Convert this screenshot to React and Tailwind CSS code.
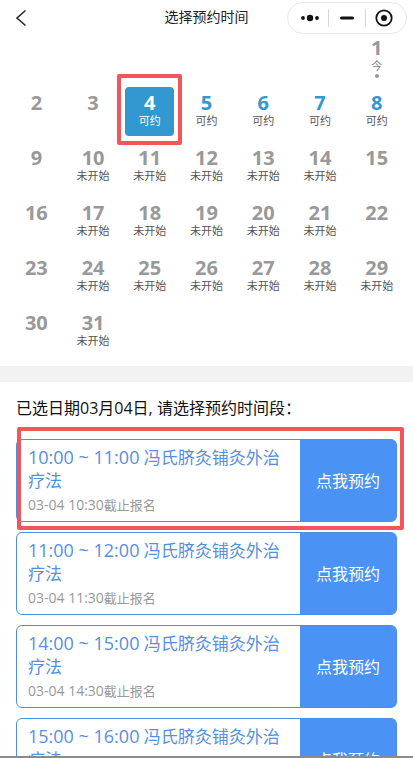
const OPEN_DAYS = [4, 5, 6, 7, 8];
const PLAIN_DAYS = [2, 3, 9, 15, 16, 22, 23, 30];
const SELECTED_DAY = 4;

const SLOTS = [
  { time: "10:00 ~ 11:00", deadline: "03-04 10:30", marked: true },
  { time: "11:00 ~ 12:00", deadline: "03-04 11:30" },
  { time: "14:00 ~ 15:00", deadline: "03-04 14:30" },
  { time: "15:00 ~ 16:00", deadline: "03-04 15:30" },
];

function Header() {
  return (
    <header className="relative flex h-[29px] shrink-0 items-center justify-center pt-[5px]">
      <button type="button" aria-label="返回" className="absolute left-[15px] top-[9px]">
        <svg width="12" height="18" viewBox="0 0 12 18" fill="none" stroke="#222" strokeWidth="1.5">
          <path d="M10.5 1.5 2 9l8.500 7.500" />
        </svg>
      </button>
      <h1 className="text-sm leading-5 text-[#222]">选择预约时间</h1>
      <div className="absolute right-[6px] top-[2px] z-10 flex h-8 w-[120px] items-center rounded-full border border-[#e8e8e8] bg-white">
        <button type="button" aria-label="更多" className="flex flex-1 justify-center pl-1">
          <svg width="20" height="8" viewBox="0 0 20 8" fill="#111">
            <circle cx="3" cy="4" r="1.900" />
            <circle cx="10" cy="4" r="3.200" />
            <circle cx="17" cy="4" r="1.900" />
          </svg>
        </button>
        <span className="h-[18px] w-px bg-[#d8d8d8]" />
        <button type="button" aria-label="最小化" className="flex flex-1 justify-center">
          <svg width="14" height="4" viewBox="0 0 14 4">
            <rect width="14" height="3" y="0.500" rx="1.500" fill="#111" />
          </svg>
        </button>
        <span className="h-[18px] w-px bg-[#d8d8d8]" />
        <button type="button" aria-label="关闭" className="flex flex-1 justify-center pr-1">
          <svg width="18" height="18" viewBox="0 0 18 18">
            <circle cx="9" cy="9" r="7.700" fill="none" stroke="#111" strokeWidth="1.800" />
            <circle cx="9" cy="9" r="3" fill="#111" />
          </svg>
        </button>
      </div>
    </header>
  );
}

function Day({ day }) {
  const open = OPEN_DAYS.includes(day);
  const selected = day === SELECTED_DAY;
  const today = day === 1;
  const upcoming = !open && !today && !PLAIN_DAYS.includes(day);
  const numberColor = selected ? "text-white" : open ? "text-[#3398cf]" : "text-[#999]";

  return (
    <button
      type="button"
      className={`relative flex size-[49px] flex-col items-center rounded pt-1 ${selected ? "bg-[#3398cf]" : ""}`}
    >
      <span className={`text-xl leading-6 font-bold ${numberColor}`}>{day}</span>
      {open && (
        <span className={`text-[11px] leading-[11px] ${selected ? "text-white" : "text-[#555]"}`}>可约</span>
      )}
      {upcoming && <span className="text-[11px] leading-[11px] whitespace-nowrap text-[#555]">未开始</span>}
      {today && (
        <>
          <span className="text-[11px] leading-[11px] text-[#777]">今</span>
          <span className="mt-[3px] size-1 rounded-full bg-[#999]" />
        </>
      )}
      {selected && (
        <span className="pointer-events-none absolute -inset-x-2 -top-[13px] -bottom-[9px] rounded-xs border-4 border-[#f2555a]" />
      )}
    </button>
  );
}

function Calendar() {
  const days = Array.from({ length: 31 }, (_, i) => i + 1);
  return (
    <section className="grid shrink-0 auto-rows-[55px] grid-cols-7 place-items-center px-2 pb-[7px]">
      {days.map((day) => (
        <div key={day} className={day === 1 ? "col-start-7" : ""}>
          <Day day={day} />
        </div>
      ))}
    </section>
  );
}

function Slot({ time, deadline, marked }) {
  return (
    <li className="relative flex rounded-md border border-[#4a90e2]">
      <div className="min-w-0 flex-1 pt-[6px] pr-3 pb-[6px] pl-[11px]">
        <p className="text-[17px] leading-[23px] text-[#5590e0]">
          <time className="text-lg leading-[23px]">{time}</time> 冯氏脐灸铺灸外治疗法
        </p>
        <p className="mt-[3px] text-[13px] leading-5 text-[#999]">
          <time className="text-sm leading-5">{deadline}</time>截止报名
        </p>
      </div>
      <button type="button" className="w-24 shrink-0 rounded-r bg-[#4a92f3] text-base text-white">
        点我预约
      </button>
      {marked && (
        <span className="pointer-events-none absolute -top-[13px] -right-2 -bottom-[9px] left-0 rounded-xs border-4 border-[#f2555a]" />
      )}
    </li>
  );
}

export default function App() {
  return (
    <main className="flex h-screen flex-col overflow-hidden border-b-2 border-[#8a8a8a] bg-white font-['Open_Sans','Noto_Sans_CJK_SC',sans-serif]">
      <Header />
      <Calendar />
      <div className="h-4 shrink-0 bg-[#f2f2f2]" />
      <section className="min-h-0 flex-1 px-4 pt-[14px]">
        <h2 className="text-base leading-6 text-[#111]">已选日期03月04日, 请选择预约时间段：</h2>
        <ul className="mt-[19px] flex flex-col gap-[10px]">
          {SLOTS.map((slot) => (
            <Slot key={slot.time} {...slot} />
          ))}
        </ul>
      </section>
    </main>
  );
}
